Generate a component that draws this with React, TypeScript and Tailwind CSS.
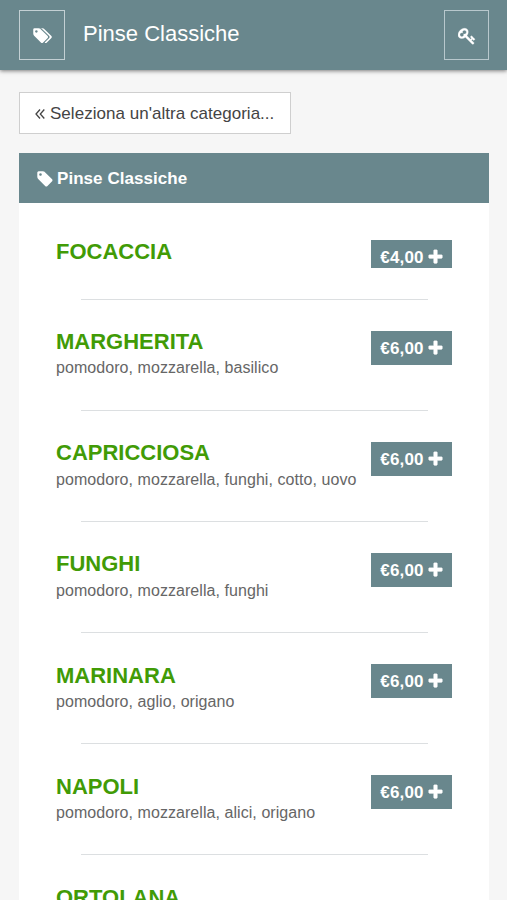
const TAG_BODY =
  'M576 448q0-53-37.5-90.5t-90.5-37.5-90.5 37.5-37.5 90.5 37.5 90.5 90.5 37.5 90.5-37.5 37.5-90.5zm1067 576q0 53-37 90l-491 492q-39 37-91 37-53 0-90-37l-715-716q-38-37-64.5-101t-26.5-117v-416q0-52 38-90t90-38h416q53 0 117 26.5t102 64.5l715 714q37 39 37 91z';
const TAGS_BACK =
  'M2027 1024q0 53-37 90l-491 492q-39 37-91 37-36 0-59-14t-53-45l470-470q37-37 37-90 0-52-37-91l-715-714q-38-38-102-64.5t-117-26.5h224q53 0 117 26.5t102 64.5l715 714q37 39 37 91z';
const KEY =
  'M832 512q0-80-56-136t-136-56-136 56-56 136q0 42 19 83-41-19-83-19-80 0-136 56t-56 136 56 136 136 56 136-56 56-136q0-42-19-83 41 19 83 19 80 0 136-56t56-136zm851 704q0 17-49 66t-66 49q-9 0-28.5-16t-36.5-33-38.5-40-24.5-26l-96 96 220 220q28 28 28 68 0 42-39 81t-81 39q-40 0-68-28l-671-671q-176 131-365 131-163 0-265.5-102.5t-102.5-265.5q0-160 95-313t248-248 313-95q163 0 265.5 102.5t102.5 265.5q0 189-131 365l355 355 96-96q-3-3-26-24.5t-40-38.5-33-36.5-16-28.5q0-17 49-66t66-49q13 0 23 10 6 6 46 44.5t82 79.5 86.5 86 73 78 28.5 41z';
const PLUS =
  'M1600 736v192q0 40-28 68t-68 28h-416v416q0 40-28 68t-68 28h-192q-40 0-68-28t-28-68v-416h-416q-40 0-68-28t-28-68v-192q0-40 28-68t68-28h416v-416q0-40 28-68t68-28h192q40 0 68 28t28 68v416h416q40 0 68 28t28 68z';

const items = [
  { name: 'FOCACCIA', description: '', price: '€4,00' },
  { name: 'MARGHERITA', description: 'pomodoro, mozzarella, basilico', price: '€6,00' },
  { name: 'CAPRICCIOSA', description: 'pomodoro, mozzarella, funghi, cotto, uovo', price: '€6,00' },
  { name: 'FUNGHI', description: 'pomodoro, mozzarella, funghi', price: '€6,00' },
  { name: 'MARINARA', description: 'pomodoro, aglio, origano', price: '€6,00' },
  { name: 'NAPOLI', description: 'pomodoro, mozzarella, alici, origano', price: '€6,00' },
  { name: 'ORTOLANA', description: '', price: '' },
];

type Item = (typeof items)[number];

function MenuItem({ item }: { item: Item }) {
  return (
    <li className={item.description ? 'h-[111.2px] shrink-0' : 'h-[90.5px] shrink-0'}>
      <div className={item.description ? 'flex h-[80.7px] justify-between' : 'flex h-[60px] justify-between'}>
        <div>
          <h2 className="text-[22px] leading-[25px] font-bold text-[#419b06]">{item.name}</h2>
          <p className="mt-[3.4px] text-[16px] leading-[22px] tracking-[0.06px] whitespace-nowrap text-[#666]">
            {item.description}
          </p>
        </div>
        {item.price && (
          <button
            className={
              'mt-[1.5px] flex w-[81px] shrink-0 justify-center gap-[4px] overflow-hidden bg-[#69878d] pt-[8px] text-[17px] leading-[20px] font-bold text-white ' +
              (item.description ? 'h-[34px]' : 'h-[28px]')
            }
          >
            <span className="tracking-[0.15px]">{item.price}</span>
            <svg viewBox="128 64 1536 1536" className="mt-px h-[15px] w-[15px] fill-current stroke-current">
              <path d={PLUS} strokeWidth="30" />
            </svg>
          </button>
        )}
      </div>
      <hr className="mr-[24px] ml-[25px] border-0 border-t border-[#dcdfe1]" />
    </li>
  );
}

export default function App() {
  return (
    <div className="flex h-[900px] w-[507px] flex-col overflow-hidden bg-[#f6f6f6] font-['Liberation_Sans',Arial,sans-serif]">
      <header className="flex h-[70px] shrink-0 items-start bg-[#69878d] pt-[10px] pr-[18px] pl-[19px] text-white shadow-[0_1px_4px_rgba(0,0,0,0.5)]">
        <button className="flex h-[50px] w-[46px] items-center justify-center border border-[#c3d0d4] pt-px pr-px">
          <svg viewBox="0 0 2048 1792" className="h-[17.5px] w-[20px] fill-current">
            <path d={TAG_BODY} />
            <path d={TAGS_BACK} />
          </svg>
        </button>
        <h1 className="mt-[11px] ml-[18px] flex-1 text-[22px] leading-[26px]">Pinse Classiche</h1>
        <button className="flex h-[50px] w-[45px] items-center justify-center border border-[#b8c8cd] pt-px">
          <svg viewBox="0 0 1792 1792" className="h-[18px] w-[18px] fill-current stroke-current">
            <path d={KEY} strokeWidth="30" />
          </svg>
        </button>
      </header>
      <main className="flex min-h-0 flex-1 flex-col px-[19px] pt-[22px]">
        <button className="flex h-[42px] w-[272px] shrink-0 items-center border border-[#cfcfcf] bg-white pt-[2px] pl-[15px] text-[17px] text-[#444]">
          <svg viewBox="0 0 10 12" className="mr-[5px] h-[12px] w-[10px] fill-none stroke-current stroke-[1.3]">
            <path d="M5 1.5 1 6l4 4.5M9.3 1.5l-4 4.5 4 4.5" />
          </svg>
          <span className="tracking-[0.03px]">Seleziona un'altra categoria...</span>
        </button>
        <section className="mt-[19px] flex min-h-0 w-[470px] flex-1 flex-col bg-white">
          <div className="flex h-[50px] shrink-0 items-center bg-[#69878d] pt-px pl-[17px] text-[17px] font-bold text-white">
            <svg viewBox="0 0 1792 1792" className="mr-[3px] h-[18px] w-[18px] fill-current">
              <path d={TAG_BODY} />
            </svg>
            <span className="tracking-[0.05px]">Pinse Classiche</span>
          </div>
          <ul className="flex min-h-0 flex-1 flex-col overflow-hidden px-[37px] pt-[35.5px]">
            {items.map((item) => (
              <MenuItem key={item.name} item={item} />
            ))}
          </ul>
        </section>
      </main>
    </div>
  );
}
